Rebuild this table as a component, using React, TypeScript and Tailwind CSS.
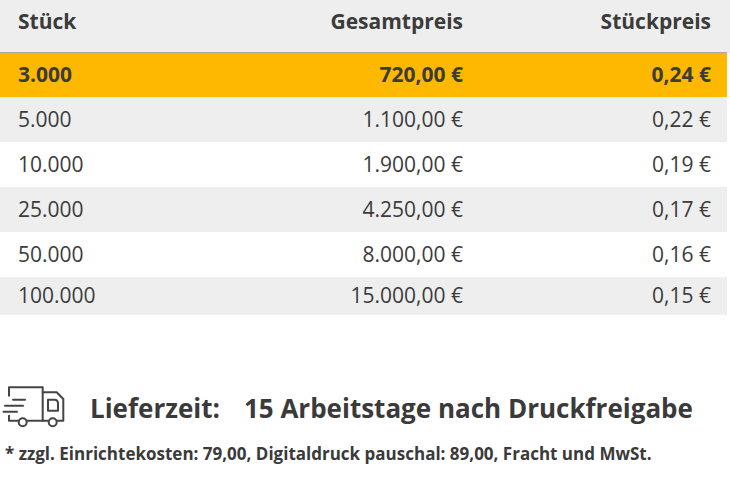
import React from "react";

const rows = [
  { n: "5.000", g: "1.100,00 €", s: "0,22 €", bg: "bg-[#eeeeee]", h: "h-[45px]" },
  { n: "10.000", g: "1.900,00 €", s: "0,19 €", bg: "bg-white", h: "h-[45px]" },
  { n: "25.000", g: "4.250,00 €", s: "0,17 €", bg: "bg-[#eeeeee]", h: "h-[45px]" },
  { n: "50.000", g: "8.000,00 €", s: "0,16 €", bg: "bg-white", h: "h-[45px]" },
  { n: "100.000", g: "15.000,00 €", s: "0,15 €", bg: "bg-[#eeeeee]", h: "h-[38px]" },
];

function Truck() {
  return (
    <svg width="70" height="50" viewBox="0 0 70 50" fill="none" stroke="#444" strokeWidth="2" strokeLinecap="round" strokeLinejoin="round">
      <path d="M9 16.7 V8.3 H42.7 V41.7" />
      <path d="M42.7 13.3 H56.7 L63.3 20 V41.7 H57" />
      <path d="M48 20.7 H54.5 Q58 20.7 58 24.5 V31.7 H48 Z" />
      <path d="M13 20.7 H25" />
      <path d="M5 26.7 H23" />
      <path d="M3.5 32.7 H17" />
      <path d="M9 36.7 V41.7 H18.5" />
      <circle cx="22.7" cy="43.3" r="4" />
      <path d="M26.7 41.7 H48.5" />
      <circle cx="52.7" cy="43.3" r="4" />
    </svg>
  );
}

export default function App() {
  return (
    <div className="w-[730px] h-[487px] bg-white text-[#3b3b3b] font-['Open_Sans',sans-serif] overflow-hidden">
      <div className="bg-[#eeeeee] w-[730px]">
        <div className="flex w-[727px] h-[53px] pb-[9px] items-center pl-[18px] pr-[16px] border-b border-[#a8a8a8] text-[21px] font-bold">
          <div className="flex-1">Stück</div>
          <div className="w-[200px] text-right">Gesamtpreis</div>
          <div className="w-[248px] text-right">Stückpreis</div>
        </div>
      </div>
      <div className="w-[727px]">
        <div className="flex h-[44px] items-center pl-[18px] pr-[16px] bg-[#feb800] text-[21px] font-bold">
          <div className="flex-1">3.000</div>
          <div className="w-[200px] text-right">720,00 €</div>
          <div className="w-[248px] text-right">0,24 €</div>
        </div>
        {rows.map((r) => (
          <div key={r.n} className={`flex ${r.h} items-center pl-[18px] pr-[16px] ${r.bg} text-[21px]`}>
            <div className="flex-1">{r.n}</div>
            <div className="w-[200px] text-right">{r.g}</div>
            <div className="w-[248px] text-right">{r.s}</div>
          </div>
        ))}
      </div>
      <div className="mt-[64px] flex items-center h-[50px]">
        <Truck />
        <div className="ml-[20px] mt-[8px] flex items-center text-[26px] font-bold text-[#3a3a3a]">
          <span>Lieferzeit:</span>
          <span className="ml-[24px]">15 Arbeitstage nach Druckfreigabe</span>
        </div>
      </div>
      <div className="mt-[14px] pl-[5px] text-[17px] leading-[22px] font-bold text-[#3a3a3a]">
        * zzgl. Einrichtekosten: 79,00, Digitaldruck pauschal: 89,00, Fracht und MwSt.
      </div>
    </div>
  );
}
